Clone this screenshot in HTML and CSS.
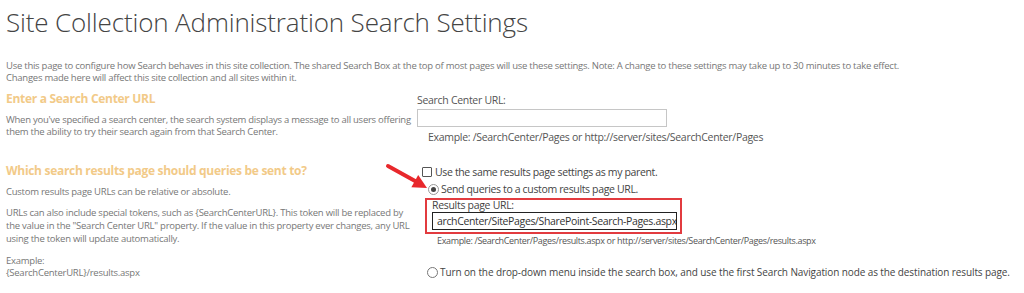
FILE: index.html
```html
<!DOCTYPE html>
<html lang="en">
    <head>
        <meta charset="utf-8"/>
        <title>Site Collection Administration Search Settings</title>
        <link rel="stylesheet" href="styles.css">
    </head>
    <body>
        <div class="page">
            <h1 class="page-title">Site Collection Administration Search Settings</h1>
            <p class="intro">Use this page to configure how Search behaves in this site collection. The shared Search Box at the top of most pages will use these settings. Note: A change to these settings may take up to 30 minutes to take effect.<br>Changes made here will affect this site collection and all sites within it.</p>

            <div class="section section-center">
                <div class="section-info">
                    <h3>Enter a Search Center URL</h3>
                    <p>When you've specified a search center, the search system displays a message to all users offering them the ability to try their search again from that Search Center.</p>
                </div>
                <div class="section-controls">
                    <div class="field-label">Search Center URL:</div>
                    <input class="text-input center-input" type="text">
                    <div class="example">Example: /SearchCenter/Pages or http://server/sites/SearchCenter/Pages</div>
                </div>
            </div>

            <div class="section section-results">
                <div class="section-info">
                    <h3>Which search results page should queries be sent to?</h3>
                    <p>Custom results page URLs can be relative or absolute.</p>
                    <p>URLs can also include special tokens, such as {SearchCenterURL}. This token will be replaced by the value in the "Search Center URL" property. If the value in this property ever changes, any URL using the token will update automatically.</p>
                    <p class="token-example">Example:<br>{SearchCenterURL}/results.aspx</p>
                </div>
                <div class="section-controls">
                    <label class="option option-check"><span class="checkbox"></span>Use the same results page settings as my parent.</label>
                    <label class="option option-radio"><span class="radio checked"></span>Send queries to a custom results page URL.</label>
                    <div class="highlight">
                        <div class="field-label">Results page URL:</div>
                        <div class="text-input url-input">archCenter/SitePages/SharePoint-Search-Pages.aspx</div>
                    </div>
                    <div class="example example-results">Example: /SearchCenter/Pages/results.aspx or http://server/sites/SearchCenter/Pages/results.aspx</div>
                    <label class="option option-nav"><span class="radio"></span>Turn on the drop-down menu inside the search box, and use the first Search Navigation node as the destination results page.</label>

                    <!-- red call-out arrow pointing at the selected option -->
                    <svg class="arrow" width="50" height="32" viewBox="0 0 50 32">
                        <line x1="3" y1="4" x2="31" y2="19.5" stroke="#e8282c" stroke-width="4" stroke-linecap="round"/>
                        <polygon points="42,26 26.4,25.2 33.2,13" fill="#e8282c"/>
                    </svg>
                </div>
            </div>
        </div>
    </body>
</html>
```

FILE: styles.css
```css
html, body {
    margin: 0;
    padding: 0;
    background: #fff;
    font-family: "Open Sans", "Noto Sans", sans-serif;
    color: #777;
}

.page {
    padding: 4px 0 0 6px;
}

.page-title {
    margin: 0;
    font-weight: 300;
    font-size: 26px;
    line-height: 36px;
    color: #444;
    letter-spacing: -0.15px;
}

.intro {
    margin: 20px 0 0;
    font-size: 9.5px;
    line-height: 12px;
    letter-spacing: -0.25px;
}

.section {
    display: flex;
}

.section-center {
    margin-top: 6px;
}

.section-results {
    margin-top: 18px;
}

.section-info {
    width: 411px;
    flex-shrink: 0;
}

.section-info h3 {
    margin: 0;
    font-size: 12px;
    line-height: 18px;
    font-weight: 700;
    color: #f2ca88;
    letter-spacing: -0.3px;
}

.section-info p {
    margin: 8px 0 0;
    font-size: 9.5px;
    line-height: 13px;
    letter-spacing: -0.25px;
    max-width: 408px;
}

.section-center .section-info p {
    margin-top: 6px;
    line-height: 12px;
}

.section-results .section-info h3 + p {
    margin-top: 5px;
}

.section-info .token-example {
    margin-top: 10px;
    line-height: 12px;
}

.section-controls {
    position: relative;
    flex: 1;
    font-size: 10.5px;
    letter-spacing: -0.3px;
}

.field-label {
    line-height: 14px;
    margin-top: 3px;
    color: #555;
}

.text-input {
    box-sizing: border-box;
    display: block;
    border: 1px solid #c6c6c6;
    background: #fff;
    font: inherit;
}

.center-input {
    width: 250px;
    height: 18px;
    margin-top: 2px;
}

.example {
    margin: 3px 0 0 11px;
    line-height: 14px;
    color: #555;
}

.option {
    display: flex;
    align-items: center;
    font-size: 10.5px;
    line-height: 14px;
    letter-spacing: -0.35px;
    color: #444;
}

.option-check {
    margin-left: 5px;
    margin-top: 3px;
}

.option-radio {
    margin-left: 11px;
    margin-top: 3px;
}

.checkbox {
    box-sizing: border-box;
    width: 10px;
    height: 10px;
    border: 1px solid #555;
    border-radius: 1px;
    margin-right: 3px;
}

.radio {
    position: relative;
    box-sizing: border-box;
    width: 11px;
    height: 11px;
    border: 1px solid #777;
    border-radius: 50%;
    margin-right: 2px;
}

.radio.checked {
    border-color: #999;
}

.radio.checked::after {
    content: "";
    position: absolute;
    left: 2px;
    top: 2px;
    width: 5px;
    height: 5px;
    border-radius: 50%;
    background: #444;
}

.highlight {
    width: 257px;
    margin-top: 2px;
    margin-left: 8px;
    padding: 0 3px 2px 5px;
    border: 2px solid #e23b3f;
    box-sizing: border-box;
}

.highlight .field-label {
    margin-top: 0;
    line-height: 11px;
    margin-bottom: 1px;
    color: #444;
}

.url-input {
    border: 1px solid #222;
    height: 18px;
    line-height: 16px;
    padding-left: 4px;
    white-space: nowrap;
    overflow: hidden;
    font-size: 10.5px;
    letter-spacing: -0.35px;
    color: #333;
}

.example-results {
    margin-left: 20px;
    margin-top: 0;
    font-size: 9px;
    letter-spacing: -0.35px;
}

.option-nav {
    margin-left: 10px;
    margin-top: 17px;
    font-size: 10px;
    letter-spacing: -0.1px;
}

.arrow {
    position: absolute;
    left: -32px;
    top: 0;
}
```
